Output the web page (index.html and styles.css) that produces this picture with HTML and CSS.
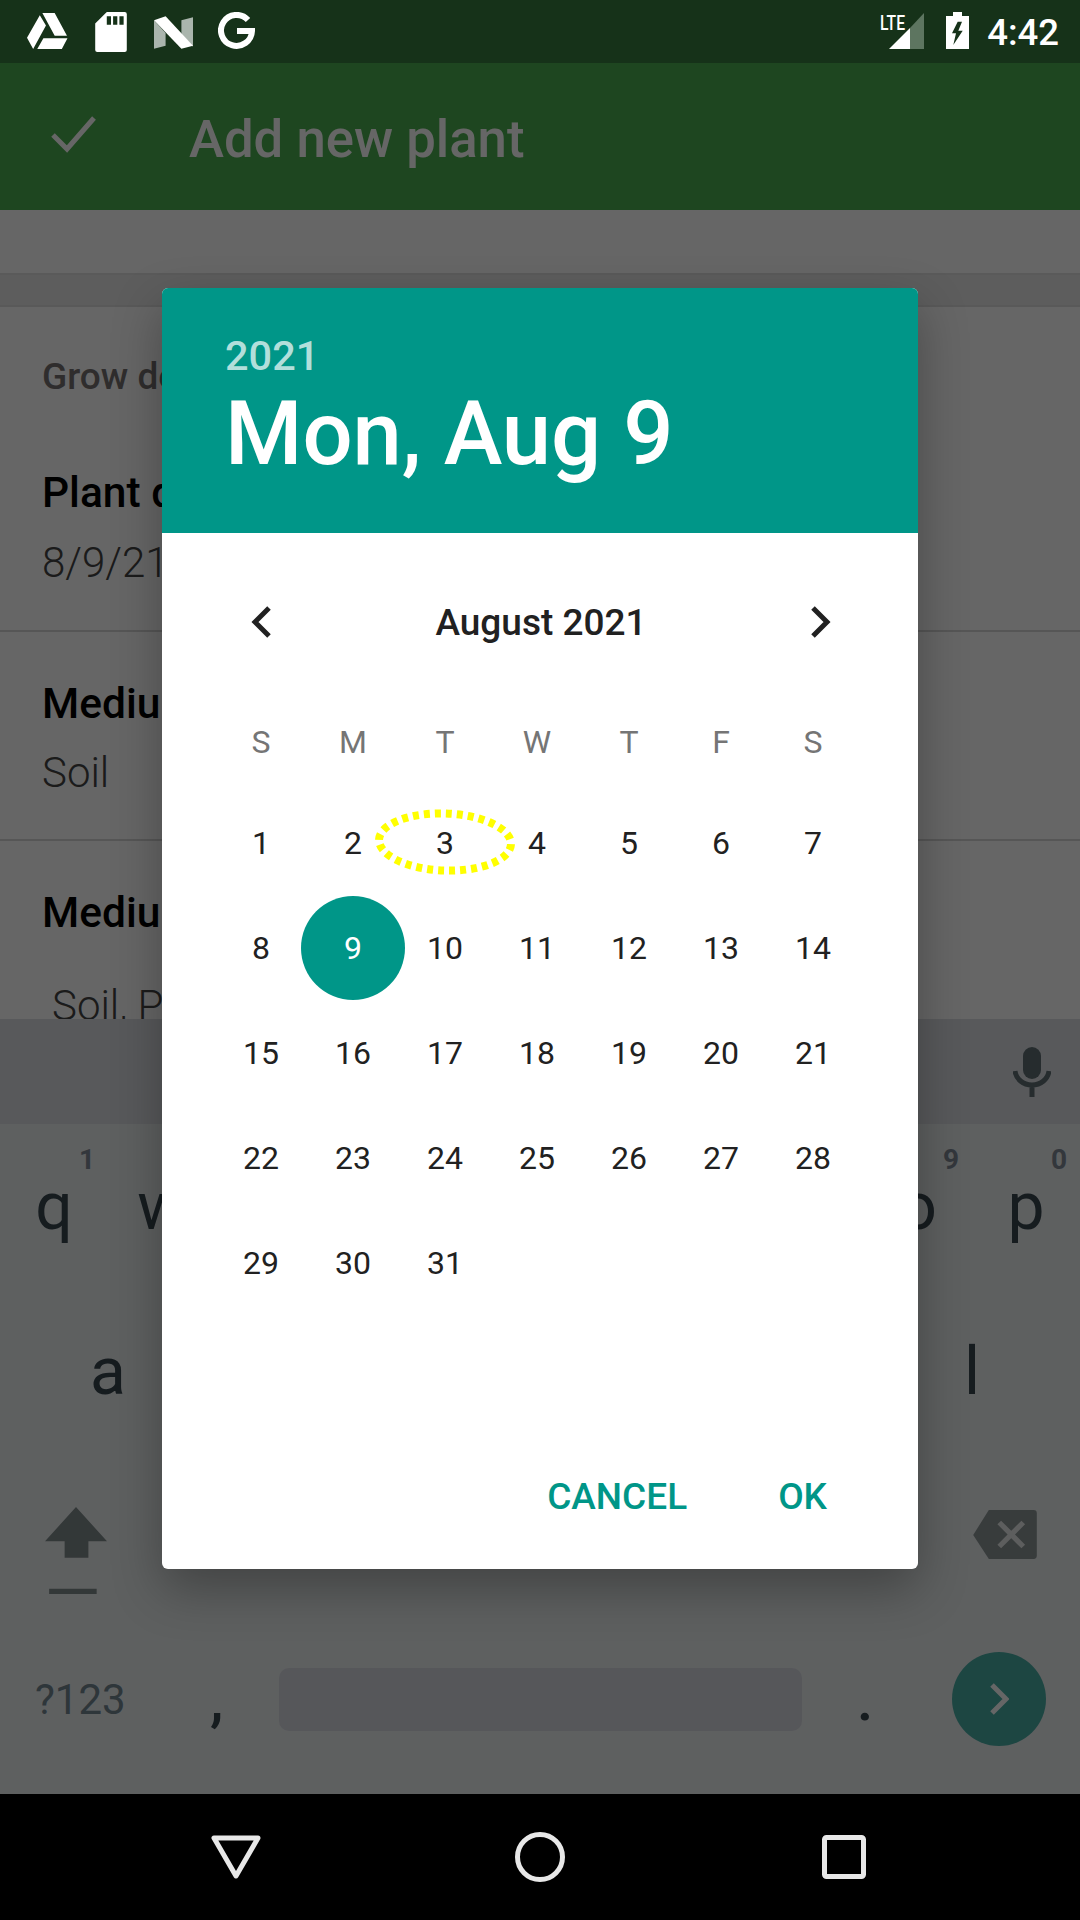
FILE: index.html
```html
<!DOCTYPE html>
<html lang="en">
<head>
  <meta charset="UTF-8" />
  <title>Add new plant</title>
  <meta name="viewport" content="width=device-width, initial-scale=1" />
  <link rel="stylesheet" href="styles.css">
</head>
<body>
  <div class="screen">
    <!-- Status bar -->
    <div class="status-bar">
      <svg class="ic-drive" width="41" height="37" viewBox="0 0 40 36"><path d="M15 1h12l12 22H27zM16 25.500h23.500L34 36H10zM12.500 3l6 10L6 36 0 25z" fill="#fff"/></svg>
      <svg class="ic-sd" width="32" height="40" viewBox="0 0 30 38"><path d="M11 0h17a2 2 0 0 1 2 2v34a2 2 0 0 1-2 2H2a2 2 0 0 1-2-2V11z" fill="#fff"/><path d="M11 4h4v8h-4zM17 4h4v8h-4zM23 4h4v8h-4z" fill="#163219"/></svg>
      <svg class="ic-n" width="39" height="34" viewBox="0 0 37 32"><path d="M0 4l11 12v12L0 31zM37 1L26 4v13l11 12z" fill="#aab5ad"/><path d="M0 4L11 0l26 28-11 3z" fill="#fff"/></svg>
      <svg class="ic-g" width="37" height="38" viewBox="0 0 37 38"><path d="M30 8A15.500 15.500 0 1 0 34 19H19" fill="none" stroke="#fff" stroke-width="6"/></svg>
      <div class="status-right">
        <svg class="ic-signal" width="44" height="38" viewBox="0 0 44 38">
          <path d="M30 16L44 1v36H30z" fill="#5d7560"/>
          <path d="M9 37l21-21v21z" fill="#fff"/>
          <text x="0" y="18" textLength="25" lengthAdjust="spacingAndGlyphs" class="lte">LTE</text>
        </svg>
        <svg class="ic-battery" width="23" height="37" viewBox="0 0 23 37"><path d="M7 0h9v4h7v33H0V4h7z" fill="#fff"/><path d="M11.700 9.700L6 21.300h4L7.300 33l9.400-14.300h-4.400L16 9.700z" fill="#163219"/></svg>
        <span class="clock">4:42</span>
      </div>
    </div>

    <div class="main">
      <div class="app-bar">
        <svg class="ic-check" width="46" height="38" viewBox="0 0 46 38"><path d="M2 20l14 14L43 3" fill="none" stroke="#fff" stroke-width="5"/></svg>
        <span class="app-title">Add new plant</span>
      </div>

      <div class="form">
        <div class="tab-strip"></div>
        <div class="form-list">
          <div class="section-title">Grow details</div>
          <div class="row row-first">
            <div class="row-label">Plant date</div>
            <div class="row-value">8/9/21</div>
          </div>
          <div class="row">
            <div class="row-label">Medium</div>
            <div class="row-value">Soil</div>
          </div>
          <div class="row row-last">
            <div class="row-label">Medium details</div>
            <div class="row-value row-input">Soil, Perlite</div>
          </div>
        </div>
      </div>

      <div class="keyboard">
        <div class="suggest-strip">
          <svg width="38" height="50" viewBox="0 0 38 50"><rect x="10" y="0" width="18" height="32" rx="9" fill="#5f6e73"/><path d="M2 24c1 8 8 14 17 14s16-6 17-14M19 38v12" fill="none" stroke="#5f6e73" stroke-width="5"/></svg>
        </div>
        <div class="key-row">
          <div class="key"><sup>1</sup>q</div>
          <div class="key">w</div>
          <div class="key-gap"></div>
          <div class="key"><sup>9</sup>o</div>
          <div class="key"><sup>0</sup>p</div>
        </div>
        <div class="key-row key-row-home">
          <div class="key">a</div>
          <div class="key-gap"></div>
          <div class="key">l</div>
        </div>
        <div class="key-row key-row-shift">
          <svg class="ic-shift" width="62" height="87" viewBox="0 0 60 84"><path d="M30 0l30 33H42v16H19V33H0z" fill="#808c8c"/><path d="M4 79h46v5H4z" fill="#808c8c"/></svg>
          <svg class="ic-back" width="64" height="49" viewBox="0 0 61 47"><path d="M15 0h43a3 3 0 0 1 3 3v41a3 3 0 0 1-3 3H15L0 24z" fill="#8c9696"/><path d="M25 12l23 23M48 12L25 35" stroke="#fff" stroke-opacity=".8" stroke-width="5"/></svg>
        </div>
        <div class="key-row key-row-bottom">
          <span class="key-symbols">?123</span>
          <span class="key-comma">,</span>
          <div class="space-bar"></div>
          <span class="key-period">.</span>
          <div class="key-enter">
            <svg width="20" height="32" viewBox="0 0 20 32"><path d="M3 2l14 14L3 30" fill="none" stroke="#fff" stroke-width="5"/></svg>
          </div>
        </div>
      </div>

      <!-- Scrim + date picker -->
      <div class="scrim">
        <div class="dialog">
          <div class="dialog-head">
            <div class="head-year">2021</div>
            <div class="head-date">Mon, Aug 9</div>
          </div>
          <div class="month-row">
            <svg width="20" height="32" viewBox="0 0 20 32"><path d="M18 2L4 16l14 14" fill="none" stroke="#212121" stroke-width="5"/></svg>
            <span class="month-name">August 2021</span>
            <svg width="20" height="32" viewBox="0 0 20 32"><path d="M2 2l14 14L2 30" fill="none" stroke="#212121" stroke-width="5"/></svg>
          </div>
          <div class="cal-grid week-head">
            <span>S</span><span>M</span><span>T</span><span>W</span><span>T</span><span>F</span><span>S</span>
          </div>
          <div class="cal-grid days">
            <span>1</span><span>2</span>
            <span class="day-marked">3
              <svg class="ring" width="150" height="76" viewBox="0 0 150 76"><ellipse cx="75" cy="38" rx="66" ry="28.500" transform="rotate(2 75 38)" fill="none" stroke="#ffff00" stroke-width="8" stroke-dasharray="6 5"/></svg>
            </span>
            <span>4</span><span>5</span><span>6</span><span>7</span>
            <span>8</span><span class="day-selected">9</span><span>10</span><span>11</span><span>12</span><span>13</span><span>14</span>
            <span>15</span><span>16</span><span>17</span><span>18</span><span>19</span><span>20</span><span>21</span>
            <span>22</span><span>23</span><span>24</span><span>25</span><span>26</span><span>27</span><span>28</span>
            <span>29</span><span>30</span><span>31</span>
          </div>
          <div class="dialog-actions">
            <span>CANCEL</span>
            <span>OK</span>
          </div>
        </div>
      </div>
    </div>

    <!-- Navigation bar -->
    <div class="nav-bar">
      <svg width="50" height="44" viewBox="0 0 50 44"><path d="M3 3h44L25 41z" fill="none" stroke="#e8e8e8" stroke-width="5" stroke-linejoin="round"/></svg>
      <svg width="50" height="50" viewBox="0 0 50 50"><circle cx="25" cy="25" r="22.500" fill="none" stroke="#e8e8e8" stroke-width="5"/></svg>
      <svg class="nav-recent" width="44" height="44" viewBox="0 0 44 44"><rect x="2.500" y="2.500" width="39" height="39" rx="2" fill="none" stroke="#e8e8e8" stroke-width="5"/></svg>
    </div>
  </div>
</body>
</html>
```

FILE: styles.css
```css
* { box-sizing: border-box; }

body {
  margin: 0;
  font-family: Roboto, "Noto Sans", sans-serif;
  background: #000;
}

.screen {
  width: 1080px;
  height: 1920px;
  display: flex;
  flex-direction: column;
  overflow: hidden;
}

/* status bar */
.status-bar {
  height: 63px;
  flex: none;
  background: #163219;
  display: flex;
  align-items: flex-start;
  padding: 12px 21px 0 27px;
}
.ic-sd { margin-left: 27px; }
.ic-n { margin-left: 27px; margin-top: 4px; }
.ic-g { margin-left: 25px; }
.status-right {
  margin-left: auto;
  display: flex;
  align-items: flex-start;
}
.lte {
  font-size: 20px;
  font-weight: 500;
  fill: #fff;
}
.ic-battery { margin-left: 22px; }
.clock {
  margin-left: 18px;
  color: #fff;
  font-size: 36.5px;
  font-weight: 500;
  line-height: 42px;
}

/* everything under the scrim */
.main {
  position: relative;
  flex: 1;
  display: flex;
  flex-direction: column;
  min-height: 0;
}
.app-bar {
  height: 147px;
  flex: none;
  background: #4caf50;
  display: flex;
  align-items: center;
  padding-left: 51px;
}
.ic-check { margin-top: -6px; }
.app-title {
  margin-left: 92px;
  margin-top: 4px;
  color: #fff;
  font-size: 52.7px;
  font-weight: 500;
}

.form {
  flex: 1;
  min-height: 0;
  overflow: hidden;
  background: #e8e8e8;
}
.tab-strip {
  height: 65px;
  background: #fff;
  border-bottom: 2px solid #e0e0e0;
}
.form-list {
  margin-top: 30px;
  height: 900px;
  background: #fff;
  border-top: 2px solid #dedede;
  padding-top: 49px;
}
.section-title {
  padding-left: 42px;
  font-size: 37px;
  font-weight: 500;
  color: #757170;
  line-height: 42px;
}
.row {
  height: 209px;
  padding: 48px 0 0 42px;
  border-bottom: 2px solid #d8d8d8;
}
.row-first {
  height: 234px;
  padding-top: 71px;
}
.row-first .row-value { margin-top: 21px; }
.row-last { border-bottom: none; }
.row-label {
  font-size: 42.5px;
  font-weight: 500;
  color: #000;
  line-height: 48px;
}
.row-value {
  margin-top: 20px;
  font-size: 42px;
  font-weight: 300;
  color: #444;
  line-height: 50px;
}
.row-input {
  margin-top: 44px;
  padding-left: 10px;
}

/* keyboard */
.keyboard {
  height: 775px;
  flex: none;
  background: #eceff1;
  color: #37474f;
}
.suggest-strip {
  height: 105px;
  background: #dcdfe4;
  display: flex;
  justify-content: flex-end;
  align-items: flex-start;
  padding: 28px 29px 0 0;
}
.key-row {
  height: 165px;
  display: flex;
  align-items: center;
}
.key {
  position: relative;
  flex: 0 0 108px;
  text-align: center;
  font-size: 66px;
  line-height: 80px;
}
.key-gap { flex: 1; }
.key sup {
  position: absolute;
  right: 13px;
  top: -22px;
  font-size: 28px;
  font-weight: 700;
  line-height: 30px;
  color: #808a96;
}
.key-row-home { padding: 0 54px; }
.key-row-shift {
  justify-content: space-between;
  padding: 0 43px 0 45px;
}
.ic-shift { margin-top: 28px; }
.ic-back { margin-top: -5px; }
.key-row-bottom {
  height: 160px;
  padding-left: 35px;
}
.key-symbols {
  width: 175px;
  font-size: 42px;
  color: #738792;
}
.key-comma {
  width: 69px;
  font-size: 60px;
  font-weight: 500;
  color: #37474f;
}
.space-bar {
  width: 523px;
  height: 63px;
  background: #d7dae1;
  border-radius: 10px;
}
.key-period {
  width: 126px;
  margin-right: 24px;
  text-align: center;
  font-size: 60px;
  font-weight: 500;
  color: #37474f;
}
.key-enter {
  width: 94px;
  height: 94px;
  border-radius: 50%;
  background: #4aaea6;
  display: flex;
  align-items: center;
  justify-content: center;
}

/* dialog */
.scrim {
  position: absolute;
  inset: 0;
  background: rgba(0, 0, 0, 0.6);
  padding: 225px 0 0 162px;
}
.dialog {
  width: 756px;
  height: 1281px;
  background: #fff;
  border-radius: 6px;
  box-shadow: 0 20px 50px rgba(0, 0, 0, 0.3);
  display: flex;
  flex-direction: column;
  overflow: hidden;
}
.dialog-head {
  height: 245px;
  flex: none;
  background: #009688;
  padding: 43px 0 0 63px;
  color: #fff;
}
.head-year {
  font-size: 41.5px;
  font-weight: 500;
  line-height: 50px;
  color: #b2dfdb;
}
.head-date {
  margin-top: 3px;
  font-size: 88.5px;
  font-weight: 500;
  line-height: 100px;
}
.month-row {
  display: flex;
  align-items: center;
  justify-content: space-between;
  height: 60px;
  margin-top: 59px;
  padding: 0 87px 0 89px;
}
.month-name {
  font-size: 37px;
  font-weight: 500;
  color: #212121;
}
.cal-grid {
  display: grid;
  grid-template-columns: repeat(7, 92px);
  padding-left: 53px;
}
.cal-grid span {
  position: relative;
  display: flex;
  align-items: center;
  justify-content: center;
}
.week-head {
  margin-top: 41px;
  height: 97px;
  font-size: 32px;
  color: #757575;
  align-items: center;
}
.days {
  grid-auto-rows: 105px;
  font-size: 32px;
  color: #212121;
}
.days .day-selected {
  z-index: 0;
  color: #fff;
}
.day-selected::before {
  content: "";
  position: absolute;
  z-index: -1;
  left: -6px;
  top: 1px;
  width: 104px;
  height: 104px;
  border-radius: 50%;
  background: #009688;
}
.ring {
  position: absolute;
  left: -29px;
  top: 14px;
}
.dialog-actions {
  margin-top: auto;
  display: flex;
  justify-content: flex-end;
  gap: 91px;
  padding: 0 91px 50px 0;
  font-size: 37px;
  font-weight: 500;
  color: #009688;
  line-height: 44px;
}

/* navigation bar */
.nav-bar {
  height: 126px;
  flex: none;
  background: #000;
  display: flex;
  align-items: center;
  padding-left: 211px;
  gap: 254px;
}
.nav-recent { margin-left: 3px; }
```
